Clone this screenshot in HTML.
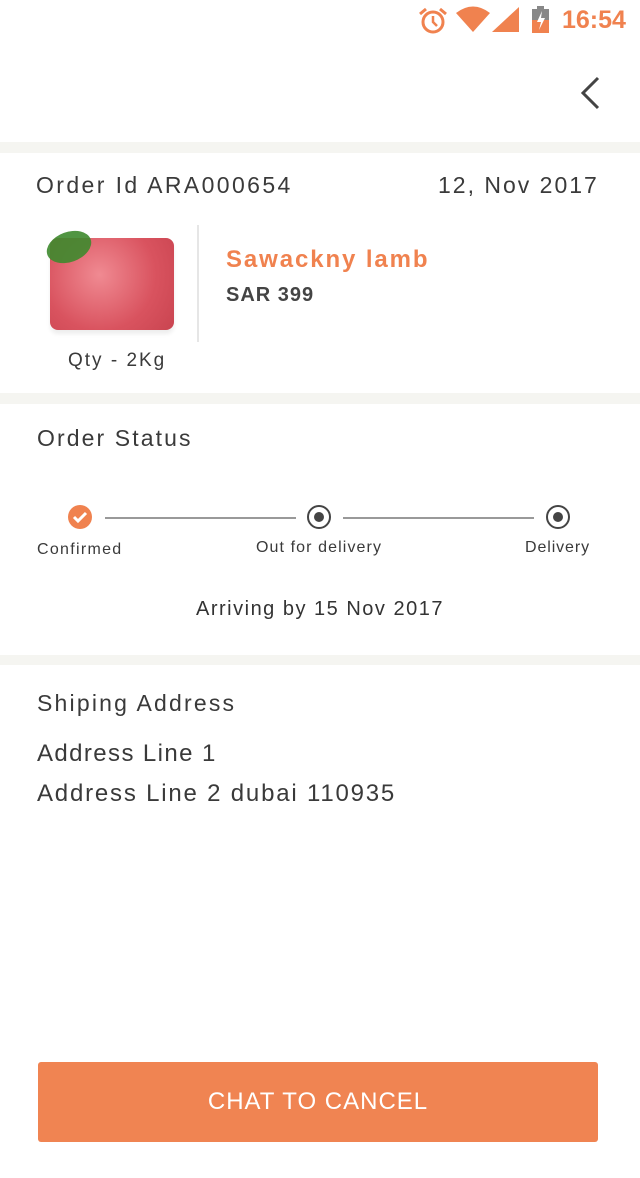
<!DOCTYPE html>
<html><head><meta charset="utf-8"><style>
*{margin:0;padding:0;box-sizing:border-box}
body{width:640px;height:1178px;background:#fff;font-family:"Liberation Sans",sans-serif;color:#3a3a3a;position:relative;overflow:hidden}
.a{position:absolute;white-space:nowrap}
.band{position:absolute;left:0;width:640px;background:#f5f5f1}
</style></head><body>
<svg class="a" style="left:418px;top:6px" width="30" height="30" viewBox="0 0 30 30"><circle cx="15" cy="16" r="10" fill="none" stroke="#f0824f" stroke-width="3"/><path d="M15 10v6l4 4" stroke="#f0824f" stroke-width="2.5" fill="none"/><path d="M2 8l6-5M28 8l-6-5" stroke="#f0824f" stroke-width="3"/></svg>
<svg class="a" style="left:456px;top:6px" width="34" height="28" viewBox="0 0 34 28"><path d="M0 7Q17-6 34 7L17 26Z" fill="#f0824f"/></svg>
<svg class="a" style="left:492px;top:7px" width="28" height="26" viewBox="0 0 28 26"><path d="M27 0V25H0Z" fill="#f0824f"/></svg>
<svg class="a" style="left:532px;top:6px" width="18" height="28" viewBox="0 0 18 28"><rect x="5" y="0" width="7" height="3" fill="#888"/><rect x="0" y="3" width="17" height="11" fill="#888"/><rect x="0" y="14" width="17" height="13" fill="#f0824f"/><path d="M10 5L5 16h4l-2 8 6-12H9z" fill="#fff"/></svg>
<div class="a" style="left:562px;top:6px;font-size:25px;font-weight:bold;color:#f0824f">16:54</div>
<svg class="a" style="left:578px;top:76px" width="26" height="34" viewBox="0 0 26 34"><path d="M20 2L5 17l15 15" stroke="#444" stroke-width="3" fill="none"/></svg>

<div class="band" style="top:142px;height:11px"></div>
<div class="a" style="left:36px;top:172px;font-size:23px;letter-spacing:2.4px">Order Id ARA000654</div>
<div class="a" style="left:438px;top:172px;font-size:23px;letter-spacing:2px">12, Nov 2017</div>
<div class="a" style="left:50px;top:238px;width:124px;height:92px;border-radius:8px;background:radial-gradient(circle at 40% 40%,#f08a92,#d9535f 60%,#c94450);box-shadow:0 4px 4px #eee"></div>
<div class="a" style="left:46px;top:232px;width:46px;height:30px;border-radius:50%;background:#3e8a2e;opacity:.9;transform:rotate(-20deg)"></div>
<div class="a" style="left:197px;top:225px;width:2px;height:117px;background:#e6e6e6"></div>
<div class="a" style="left:226px;top:246px;font-size:24px;font-weight:bold;color:#f0824f;letter-spacing:1.9px">Sawackny lamb</div>
<div class="a" style="left:226px;top:284px;font-size:20px;font-weight:bold;color:#444;letter-spacing:1px">SAR 399</div>
<div class="a" style="left:68px;top:350px;font-size:19px;letter-spacing:2px">Qty - 2Kg</div>

<div class="band" style="top:393px;height:11px"></div>
<div class="a" style="left:37px;top:425px;font-size:23px;letter-spacing:2.1px">Order Status</div>
<div class="a" style="left:68px;top:505px;width:24px;height:24px;border-radius:50%;background:#f0824f"></div>
<svg class="a" style="left:68px;top:505px" width="24" height="24" viewBox="0 0 24 24"><path d="M6 12l4 4 8-8" stroke="#fff" stroke-width="3" fill="none"/></svg>
<div class="a" style="left:105px;top:517px;width:191px;height:2px;background:#999"></div>
<div class="a" style="left:343px;top:517px;width:191px;height:2px;background:#999"></div>
<div class="a" style="left:307px;top:505px;width:24px;height:24px;border-radius:50%;border:2.5px solid #444"></div>
<div class="a" style="left:314px;top:512px;width:10px;height:10px;border-radius:50%;background:#444"></div>
<div class="a" style="left:546px;top:505px;width:24px;height:24px;border-radius:50%;border:2.5px solid #444"></div>
<div class="a" style="left:553px;top:512px;width:10px;height:10px;border-radius:50%;background:#444"></div>
<div class="a" style="left:37px;top:541px;font-size:16px;letter-spacing:1.3px">Confirmed</div>
<div class="a" style="left:256px;top:539px;font-size:16px;letter-spacing:1.1px">Out for delivery</div>
<div class="a" style="left:525px;top:539px;font-size:16px;letter-spacing:0.9px">Delivery</div>
<div class="a" style="left:0;width:640px;text-align:center;top:598px;font-size:20px;color:#333;letter-spacing:1.5px">Arriving by 15 Nov 2017</div>

<div class="band" style="top:655px;height:10px"></div>
<div class="a" style="left:37px;top:690px;font-size:23px;letter-spacing:2.2px">Shiping Address</div>
<div class="a" style="left:37px;top:740px;font-size:24px;letter-spacing:1.4px">Address Line 1</div>
<div class="a" style="left:37px;top:780px;font-size:24px;letter-spacing:1.8px">Address Line 2 dubai 110935</div>

<div class="a" style="left:38px;top:1062px;width:560px;height:80px;background:#f08452;border-radius:3px;color:#fff;font-size:24px;text-align:center;line-height:80px;letter-spacing:1px">CHAT TO CANCEL</div>
</body></html>
